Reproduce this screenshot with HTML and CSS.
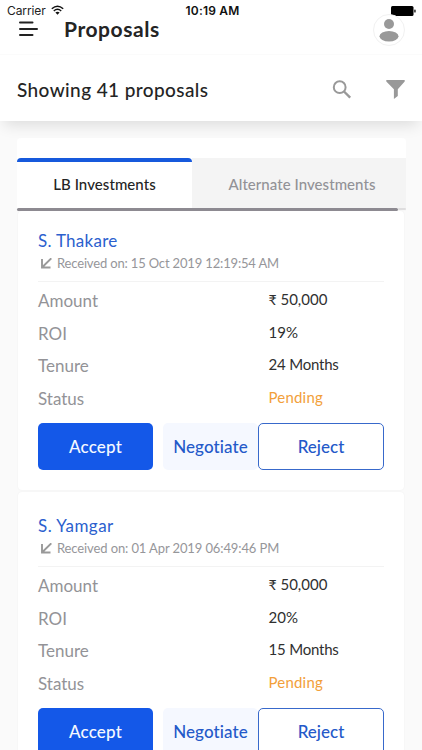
FILE: index.html
```html
<!DOCTYPE html>
<html lang="en">
<head>
<meta charset="utf-8">
<title>Proposals</title>
<link rel="stylesheet" href="styles.css">
</head>
<body>
<header class="top">
  <div class="status">
    <div class="carrier"><span>Carrier</span>
      <svg width="13" height="10" viewBox="0 0 13 10" fill="none" stroke="#111" stroke-width="1.5"><path d="M.8 3.8Q6.500-1.400 12.200 3.800M2.800 6Q6.500 2.600 10.200 6"/><path d="M4.400 7.600Q6.500 5.900 8.600 7.600L6.500 9.700Z" fill="#111" stroke="none"/></svg>
    </div>
    <div class="clock">10:19 AM</div>
    <div class="battery"><svg width="25" height="10" viewBox="0 0 25 10"><rect x="0" y="0" width="22.500" height="10" rx="1.500" fill="#000"/><rect x="23.300" y="3.500" width="1.300" height="3" rx=".6" fill="#000"/></svg></div>
  </div>
  <div class="bar">
    <svg class="burger" width="20" height="16" viewBox="0 0 20 16" stroke="#222" stroke-width="2" stroke-linecap="round"><path d="M2 1.500H14.500M2 8H19M2 14H14.500"/></svg>
    <h1>Proposals</h1>
    <div class="avatar"><svg width="30" height="30" viewBox="0 0 30 30" fill="#999"><circle cx="15" cy="9" r="5"/><ellipse cx="15" cy="21.300" rx="9.500" ry="5.200"/></svg></div>
  </div>
</header>
<section class="summary">
  <h2>Showing 41 proposals</h2>
  <svg class="search" width="20" height="20" viewBox="0 0 20 20" fill="none" stroke="#999" stroke-width="2"><circle cx="7.700" cy="7.200" r="5.900"/><path d="M12 11.500L18.200 17.700" stroke-width="2.400"/></svg>
  <svg class="filter" width="19" height="20" viewBox="0 0 19 20" fill="#999"><path d="M.3 0H18.700V1.500L11.800 9.300V16L7.900 19.100V9.300L.3 1.500Z"/></svg>
</section>
<main class="panel">
  <nav class="tabs">
    <div class="tab active"><span>LB Investments</span></div>
    <div class="tab other"><span>Alternate Investments</span></div>
  </nav>
  <div class="rule"><div class="track"></div><div class="stub"></div></div>
  <article class="card first">
    <h3 class="thakare">S. Thakare</h3>
    <p class="date am"><svg width="11" height="11" viewBox="0 0 11 11" fill="none" stroke="#999" stroke-width="1.900"><path d="M1 1V9.500H9.500M1.200 9.300L10.300.3"/></svg><span>Received on: 15 Oct 2019 12:19:54 AM</span></p>
    <dl>
      <dt>Amount</dt><dd><span class="rupee">₹</span> 50,000</dd>
      <dt>ROI</dt><dd>19%</dd>
      <dt>Tenure</dt><dd class="months">24 Months</dd>
      <dt>Status</dt><dd class="pending">Pending</dd>
    </dl>
    <div class="actions"><button class="accept">Accept</button><button class="negotiate">Negotiate</button><button class="reject">Reject</button></div>
  </article>
  <article class="card">
    <h3 class="yamgar">S. Yamgar</h3>
    <p class="date pm"><svg width="11" height="11" viewBox="0 0 11 11" fill="none" stroke="#999" stroke-width="1.900"><path d="M1 1V9.500H9.500M1.200 9.300L10.300.3"/></svg><span>Received on: 01 Apr 2019 06:49:46 PM</span></p>
    <dl>
      <dt>Amount</dt><dd><span class="rupee">₹</span> 50,000</dd>
      <dt>ROI</dt><dd>20%</dd>
      <dt>Tenure</dt><dd class="months">15 Months</dd>
      <dt>Status</dt><dd class="pending">Pending</dd>
    </dl>
    <div class="actions"><button class="accept">Accept</button><button class="negotiate">Negotiate</button><button class="reject">Reject</button></div>
  </article>
</main>
</body>
</html>
```
FILE: styles.css
```css
* { box-sizing: border-box; }
html { height: 750px; overflow: hidden; }
body { margin: 0; width: 422px; height: 750px; overflow: hidden; background: #fafafa; color: #242424; font-family: Lato, sans-serif; }
h1, h2, h3, p, dl, dd { margin: 0; }
svg { display: block; flex: none; }
.top { position: relative; z-index: 1; height: 55px; background: #fff; border-bottom: 1px solid #fbfbfb; }
.status { display: grid; grid-template-columns: 1fr 80px 1fr; height: 14px; padding: 4px 6px 0 7px; font: 12px/14px Inter, sans-serif; color: #222; }
.carrier { display: flex; gap: 5px; letter-spacing: -.1px; }
.carrier svg { margin-top: 1px; }
.clock { text-align: center; padding-left: 2px; font-weight: 600; color: #111; white-space: nowrap; letter-spacing: .2px; }
.battery { display: flex; justify-content: flex-end; margin-top: 1.5px; }
.bar { display: flex; align-items: center; height: 32px; padding: 0 17px 0 18px; }
.burger { margin-right: 26px; margin-top: -2px; }
h1 { flex: 1; margin-top: -2px; font-size: 21px; line-height: 30px; font-weight: 700; letter-spacing: .55px; }
.avatar { width: 32px; height: 32px; margin-top: -1px; border: 1px solid #f1f1f1; border-radius: 50%; background: #fff; }
.summary { display: flex; align-items: center; height: 66px; padding: 4px 17px 0; background: #fff; box-shadow: 0 8px 14px -4px rgba(0,0,0,.12); }
h2 { flex: 1; font-size: 19px; line-height: 26px; font-weight: 500; letter-spacing: .4px; }
.search { margin-right: 34px; }
.panel { margin: 17px 16px 0 17px; padding-top: 20px; background: linear-gradient(#fff, #fff) top / 100% 40px no-repeat; border-radius: 4px; }
.tabs { display: flex; height: 50px; background: linear-gradient(90deg, #fff 175px, #f4f4f4 175px); }
.tab { flex: 1; text-align: center; font-size: 15px; line-height: 53px; font-weight: 500; color: #929297; white-space: nowrap; }
.tab.other { padding-left: 6px; letter-spacing: .05px; }
.tab.active { flex: 0 0 175px; line-height: 45px; letter-spacing: .07px; color: #242424; background: #fff; border-top: 4px solid #1659dc; border-radius: 4px 4px 0 0; }
.rule { display: flex; height: 3px; background: #f7f7f7; }
.track { flex: 1; background: #8d8a91; border-radius: 2px; }
.stub { width: 8px; height: 2px; background: #deddde; border-radius: 1px; }
.card { height: 284px; margin: 0 2px 2px 1px; padding: 22px 20px 0; background: #fff; border-radius: 4px; box-shadow: 0 0 2px rgba(0,0,0,.06); }
.card.first { height: 279px; padding-top: 18px; }
h3 { color: #2b60ce; font-size: 17px; line-height: 24px; font-weight: 400; }
.thakare { letter-spacing: .28px; }
.yamgar { letter-spacing: .46px; }
.date { display: flex; align-items: center; gap: 5px; height: 20px; padding-left: 3px; color: #96969a; font-size: 13px; }
.am { letter-spacing: -.16px; }
.pm { letter-spacing: -.11px; }
dl { display: grid; grid-template-columns: 230.500px 1fr; grid-auto-rows: 32.600px; margin-top: 8px; padding-top: 3px; border-top: 1px solid #f3f3f3; }
dt { font-size: 17px; line-height: 32.600px; color: #939397; }
dd { font-size: 15px; line-height: 29px; color: #303030; white-space: nowrap; }
.months { letter-spacing: -.2px; }
.rupee { font-size: 14px; letter-spacing: 0; }
dd.pending { color: #f2a03a; letter-spacing: .2px; }
.actions { display: flex; margin-top: 8px; }
button { height: 47px; padding: 0; border: 0; border-radius: 5px; font: 500 17px Lato, sans-serif; color: #2459c9; }
.accept { width: 115px; margin-right: 10px; background: #1458e8; color: #f5f8ff; letter-spacing: .2px; }
.negotiate { width: 95px; background: #f5f8ff; letter-spacing: .1px; }
.reject { flex: 1; border: 1px solid #3869cb; background: #fff; }
```
